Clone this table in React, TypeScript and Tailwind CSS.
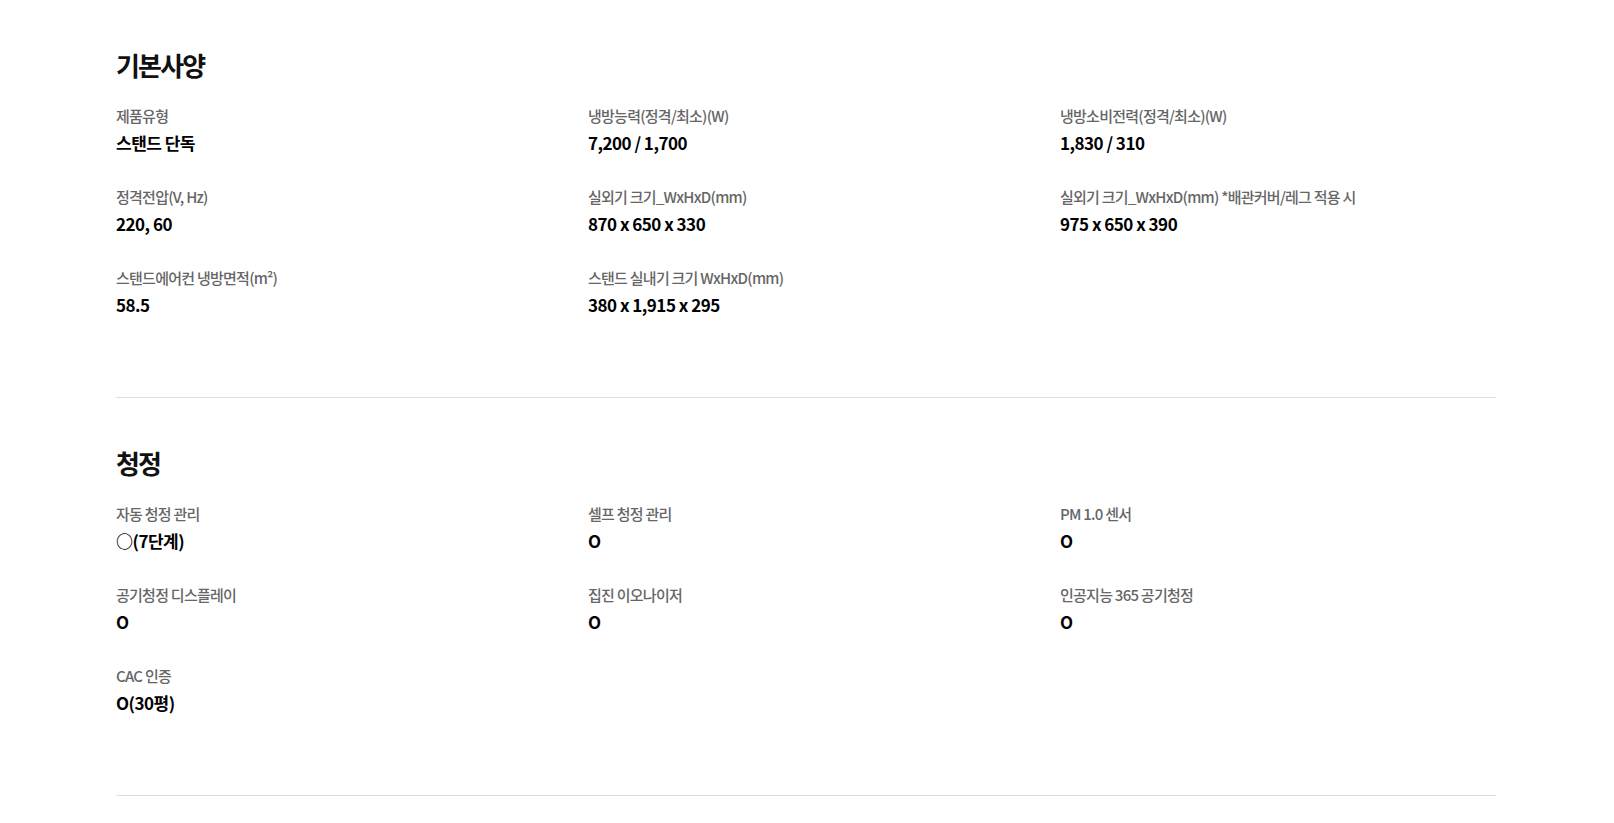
import React from 'react';

type Spec = { label: string; value: string };

const sections: { title: string; items: Spec[] }[] = [
  {
    title: '기본사양',
    items: [
      { label: '제품유형', value: '스탠드 단독' },
      { label: '냉방능력(정격/최소)(W)', value: '7,200 / 1,700' },
      { label: '냉방소비전력(정격/최소)(W)', value: '1,830 / 310' },
      { label: '정격전압(V, Hz)', value: '220, 60' },
      { label: '실외기 크기_WxHxD(mm)', value: '870 x 650 x 330' },
      { label: '실외기 크기_WxHxD(mm) *배관커버/레그 적용 시', value: '975 x 650 x 390' },
      { label: '스탠드에어컨 냉방면적(m²)', value: '58.5' },
      { label: '스탠드 실내기 크기 WxHxD(mm)', value: '380 x 1,915 x 295' },
    ],
  },
  {
    title: '청정',
    items: [
      { label: '자동 청정 관리', value: '○(7단계)' },
      { label: '셀프 청정 관리', value: 'O' },
      { label: 'PM 1.0 센서', value: 'O' },
      { label: '공기청정 디스플레이', value: 'O' },
      { label: '집진 이오나이저', value: 'O' },
      { label: '인공지능 365 공기청정', value: 'O' },
      { label: 'CAC 인증', value: 'O(30평)' },
    ],
  },
];

const SpecSection: React.FC<{ title: string; items: Spec[] }> = ({ title, items }) => (
  <section className="border-b border-[#dddddd] pt-[47px] pb-[79px]">
    <h2 className="text-[26px] leading-[36px] font-bold text-[#111] tracking-[-0.07em]">{title}</h2>
    <dl className="mt-[22px] grid grid-cols-3 gap-x-[36px] gap-y-[30px]">
      {items.map((item) => (
        <div key={item.label}>
          <dt className="text-[15px] leading-[22px] font-medium text-[#666] tracking-[-0.05em]">{item.label}</dt>
          <dd className="mt-[3px] text-[17px] leading-[26px] font-bold text-black tracking-[-0.03em]">{item.value}</dd>
        </div>
      ))}
    </dl>
  </section>
);

export default function App() {
  return (
    <div
      className="min-h-screen bg-white pl-[116px] pr-[118px]"
      style={{ fontFamily: '"Noto Sans CJK KR", "Noto Sans", sans-serif' }}
    >
      {sections.map((s) => (
        <SpecSection key={s.title} title={s.title} items={s.items} />
      ))}
    </div>
  );
}
